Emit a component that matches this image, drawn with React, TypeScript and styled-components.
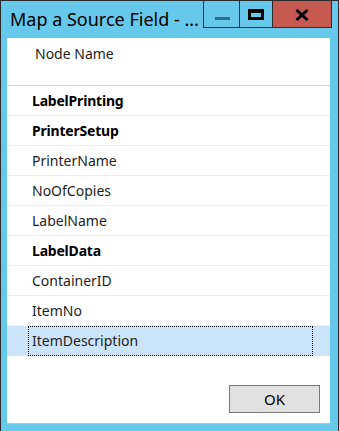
import React from "react";
import styled, { createGlobalStyle } from "styled-components";

const Global = createGlobalStyle`
  html, body { margin: 0; padding: 0; background: #ffffff; }
  body { width: 339px; height: 431px; overflow: hidden; }
  * { box-sizing: border-box; }
`;

const Window = styled.div`
  width: 339px;
  height: 431px;
  background: #66c8ea;
  border: 1px solid #2b2b2b;
  border-bottom: none;
  display: flex;
  flex-direction: column;
  font-family: "Noto Sans", "Open Sans", sans-serif;
`;

const TitleBar = styled.div`
  height: 37px;
  display: flex;
  align-items: flex-start;
  justify-content: space-between;
  padding-right: 6px;
`;

const Title = styled.div`
  padding: 5px 0 0 9px;
  font-size: 18px;
  line-height: 26px;
  color: #000000;
  white-space: nowrap;
`;

const Controls = styled.div`
  display: flex;
  height: 27px;
  border: 1px solid #2d2d2d;
  border-top: none;
`;

const CtrlButton = styled.div<{ $w: number; $bg: string; $last?: boolean }>`
  width: ${(p) => p.$w}px;
  height: 26px;
  background: ${(p) => p.$bg};
  border-right: ${(p) => (p.$last ? "none" : "1px solid #2d2d2d")};
  display: flex;
  align-items: flex-start;
  justify-content: center;
`;

const MinGlyph = styled.div`
  width: 15px;
  height: 3px;
  margin-top: 16px;
  margin-left: 1px;
  background: #2e6d88;
`;

const MaxGlyph = styled.div`
  width: 16px;
  height: 11px;
  margin-top: 8px;
  border: 3px solid #000000;
  border-top-width: 4px;
`;

const Client = styled.div`
  flex: 1;
  margin: 0 8px 8px 6px;
  background: #ffffff;
  display: flex;
  flex-direction: column;
  box-shadow: 0 1px 0 #b8c8cf;
`;

const HeaderCell = styled.div`
  height: 48px;
  border-bottom: 1px solid #d5d5d5;
  padding: 6px 0 0 28px;
  font-size: 14px;
  line-height: 20px;
  color: #1e1e1e;
`;

const Row = styled.div<{ $selected?: boolean }>`
  height: 30px;
  display: flex;
  align-items: center;
  background: ${(p) => (p.$selected ? "#cce4f7" : "transparent")};
  border-bottom: ${(p) => (p.$selected ? "none" : "1px solid #efefef")};
`;

const RowLabel = styled.div<{ $bold?: boolean; $focus?: boolean }>`
  margin-left: ${(p) => (p.$focus ? 21 : 25)}px;
  width: ${(p) => (p.$focus ? "285px" : "auto")};
  height: ${(p) => (p.$focus ? "30px" : "auto")};
  padding-left: ${(p) => (p.$focus ? 3 : 0)}px;
  border: ${(p) => (p.$focus ? "1px dotted #000000" : "none")};
  display: flex;
  align-items: center;
  font-size: 14px;
  line-height: 20px;
  letter-spacing: ${(p) => (p.$bold ? "-0.2px" : "0")};
  font-weight: ${(p) => (p.$bold ? 700 : 400)};
  color: ${(p) => (p.$bold ? "#000000" : "#1e1e1e")};
`;

const Footer = styled.div`
  flex: 1;
  display: flex;
  justify-content: flex-end;
  align-items: flex-start;
  padding: 29px 10px 0 0;
`;

const OkButton = styled.button`
  width: 91px;
  height: 28px;
  background: #e1e1e1;
  border: 1px solid #7a7a7a;
  font-family: "Noto Sans", "Open Sans", sans-serif;
  font-size: 15px;
  color: #000000;
  padding: 0;
  display: flex;
  align-items: center;
  justify-content: center;
`;

const items: { name: string; bold?: boolean }[] = [
  { name: "LabelPrinting", bold: true },
  { name: "PrinterSetup", bold: true },
  { name: "PrinterName" },
  { name: "NoOfCopies" },
  { name: "LabelName" },
  { name: "LabelData", bold: true },
  { name: "ContainerID" },
  { name: "ItemNo" },
];

export default function App() {
  return (
    <>
      <Global />
      <Window>
        <TitleBar>
          <Title>Map a Source Field - ...</Title>
          <Controls>
            <CtrlButton $w={36} $bg="#66c8ea">
              <MinGlyph />
            </CtrlButton>
            <CtrlButton $w={33} $bg="#66c8ea">
              <MaxGlyph />
            </CtrlButton>
            <CtrlButton $w={58} $bg="#c75a50" $last>
              <svg width="14" height="12" viewBox="0 0 14 12" style={{ marginTop: 8 }}>
                <path d="M1.5 1 L12.5 11 M12.5 1 L1.5 11" stroke="#000" strokeWidth="3" />
              </svg>
            </CtrlButton>
          </Controls>
        </TitleBar>
        <Client>
          <HeaderCell>Node Name</HeaderCell>
          {items.map((it) => (
            <Row key={it.name}>
              <RowLabel $bold={it.bold}>{it.name}</RowLabel>
            </Row>
          ))}
          <Row $selected>
            <RowLabel $focus>ItemDescription</RowLabel>
          </Row>
          <Footer>
            <OkButton>OK</OkButton>
          </Footer>
        </Client>
      </Window>
    </>
  );
}
